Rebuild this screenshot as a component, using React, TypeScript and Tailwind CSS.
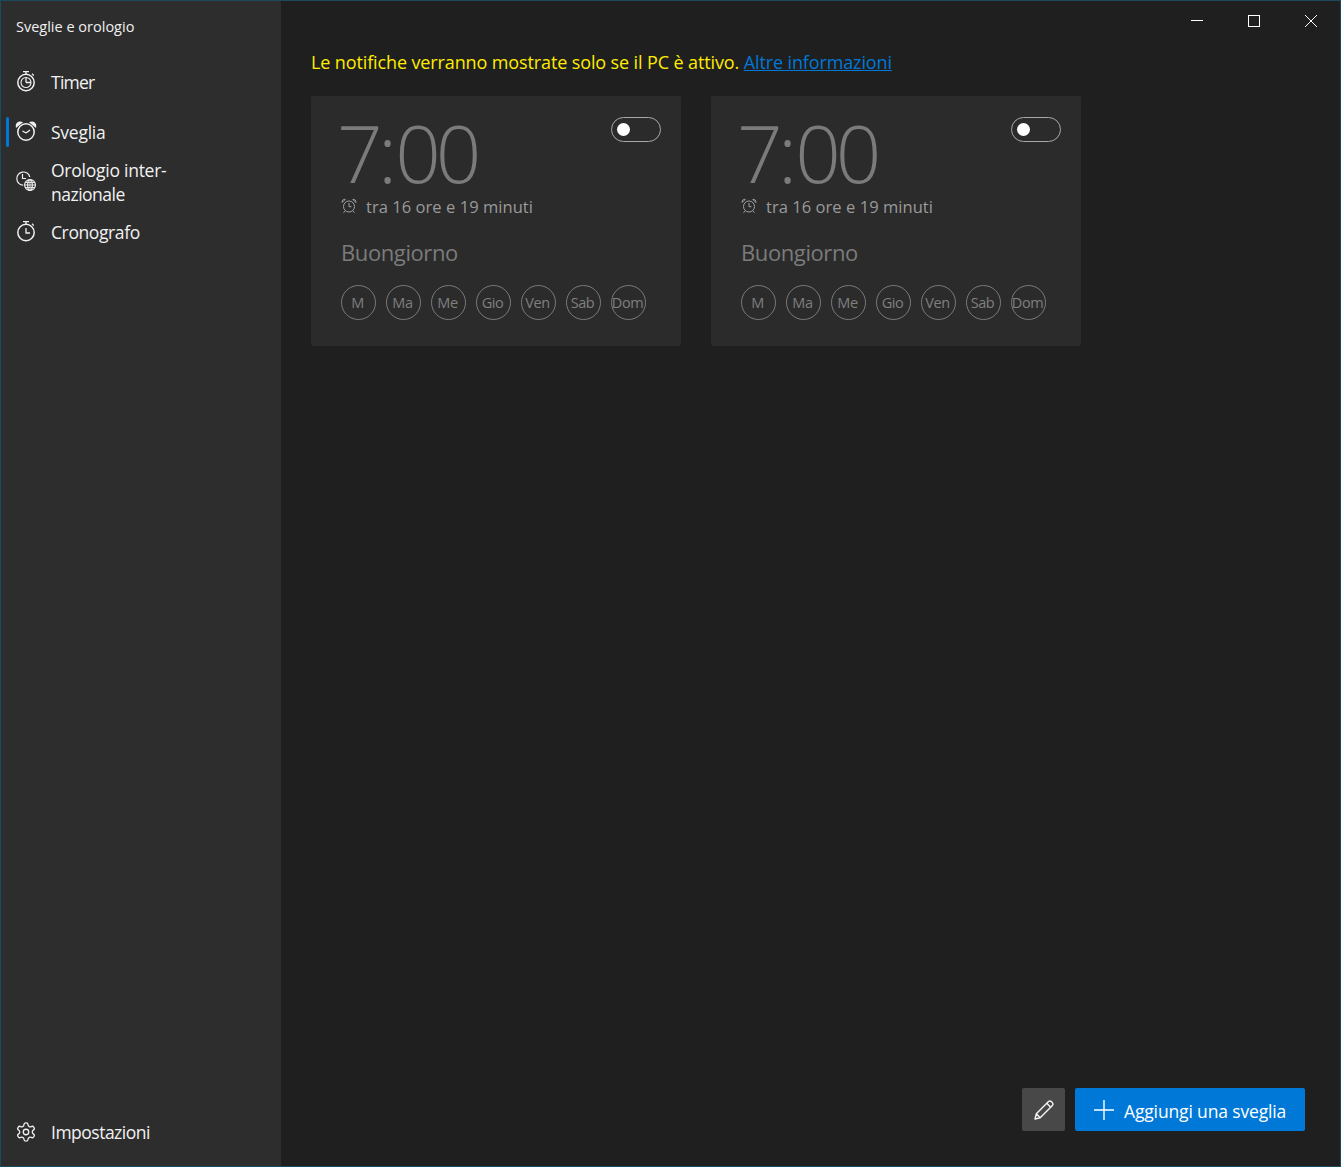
import React from "react";

function Card() {
  const days = ["M", "Ma", "Me", "Gio", "Ven", "Sab", "Dom"];
  return (
    <div className="relative w-[370px] h-[250px] bg-[#2b2b2b] rounded-[2px] pl-[30px] flex flex-col">
      <div className="h-[72px] mt-[20px] text-[80px] leading-[72px] text-[#7b7b7b] -ml-[4px] whitespace-nowrap font-light">
        <span className="tracking-[-4.6px]">7</span><span className="tracking-[-2px]">:</span><span className="tracking-[-5px]">00</span>
      </div>
      <div className="flex items-center h-[24px] mt-[7px] text-[#9a9a9a]">
        <svg width="16" height="16" viewBox="0 0 16 16" fill="none" stroke="#a0a0a0" strokeWidth="1" className="mr-[9px] -mt-[2px]">
          <circle cx="8" cy="8.5" r="5.5" />
          <path d="M8 5v3.7h2.5M1.2 4.5C.7 2.5 2.2 1 4.2 1.4L1.2 4.5zM14.8 4.5c.5-2-1-3.5-3-3.1l3 3.1zM4 13l-1.5 1.8M12 13l1.5 1.8" />
        </svg>
        <span className="text-[16.5px] tracking-[0.05px] whitespace-nowrap">tra 16 ore e 19 minuti</span>
      </div>
      <div className="mt-[17px] h-[32px] text-[22px] leading-[32px] tracking-[-0.4px] text-[#7b7b7b]">Buongiorno</div>
      <div className="flex gap-[10px] mt-[17px]">
        {days.map((d) => (
          <div key={d} className="w-[35px] h-[35px] rounded-full border border-[#7a7a7a] flex items-center justify-center pr-[2px] text-[14.5px] tracking-[-0.4px] text-[#7f7f7f] whitespace-nowrap">{d}</div>
        ))}
      </div>
      <div className="absolute right-[20px] top-[21px] w-[50px] h-[25px] rounded-full border border-[#a8a8a8] flex items-center pl-[5px]">
        <div className="w-[13px] h-[13px] rounded-full bg-white" />
      </div>
    </div>
  );
}

function NavItem({ icon, active, children }: { icon: React.ReactNode; active?: boolean; children: React.ReactNode }) {
  return (
    <div className="relative h-[50px] flex items-center text-white">
      {active && <div className="absolute left-[5px] top-[10px] w-[3px] h-[30px] rounded-[2px] bg-[#0078d7]" />}
      <div className="w-[50px] flex justify-center">{icon}</div>
      <div className="text-[17.5px] leading-[24px] text-[#f2f2f2]">{children}</div>
    </div>
  );
}

const ic = { fill: "none", stroke: "#f0f0f0", strokeWidth: 1.5 };

export default function App() {
  return (
    <div className="w-[1341px] h-[1167px] flex bg-[#1f1f1f] border border-[#1b4a5e] overflow-hidden font-['Open_Sans','Noto_Sans',sans-serif]">
      <aside className="w-[280px] bg-[#2d2d2d] flex flex-col shrink-0">
        <div className="h-[56px] pt-[15px] pl-[15px] text-[14.5px] leading-[22px] text-[#f0f0f0]">Sveglie e orologio</div>
        <NavItem icon={
          <svg width="22" height="22" viewBox="0 0 22 22" {...ic} className="-mt-[2px]">
            <circle cx="11" cy="12.5" r="8.2" /><circle cx="11" cy="12.5" r="5" strokeWidth="1.1" />
            <path d="M8 1.7h6M11 1.7v3M17 3.8l1.8 1.8M11 12.5V7.5M11 12.5h5" strokeWidth="1.3" />
          </svg>}><span className="tracking-[-0.75px]">Timer</span></NavItem>
        <NavItem active icon={
          <svg width="22" height="22" viewBox="0 0 22 22" {...ic} className="-mt-[3px]">
            <circle cx="11" cy="12" r="8.2" />
            <path d="M11 13l-3.5-2M11 13l4-3" strokeWidth="1.3" />
            <path d="M1.5 6.5C1 3.5 3.5 1.5 6.5 2.5L1.5 6.5zM20.5 6.5c.5-3-2-5-5-4l5 4z" fill="#f0f0f0" stroke="#f0f0f0" />
          </svg>}><span className="tracking-[-0.25px]">Sveglia</span></NavItem>
        <NavItem icon={
          <svg width="22" height="22" viewBox="0 0 22 22" {...ic} strokeWidth="1.2" className="-mt-[3px]">
            <path d="M8.2 15.2A6.6 6.6 0 1 1 14.8 7" />
            <path d="M7.5 4v4.5h3.5" />
            <circle cx="15" cy="15" r="5.4" />
            <ellipse cx="15" cy="15" rx="2.3" ry="5.4" />
            <path d="M9.6 15h10.8M10.4 12.5h9.2M10.4 17.5h9.2M15 9.6v10.8" strokeWidth="0.9" />
          </svg>}>
          <div className="tracking-[-0.25px]">Orologio inter-</div><div className="tracking-[-0.5px]">nazionale</div>
        </NavItem>
        <NavItem icon={
          <svg width="22" height="22" viewBox="0 0 22 22" {...ic} className="-mt-[2px]">
            <circle cx="11" cy="12.5" r="8.2" />
            <path d="M8 1.7h6M11 1.7v3M17 3.8l1.8 1.8M11 8v5h4" strokeWidth="1.3" />
          </svg>}><span className="tracking-[-0.4px]">Cronografo</span></NavItem>
        <div className="flex-1" />
        <div className="mb-[9px]">
          <NavItem icon={
            <svg width="22" height="22" viewBox="0 0 24 24" fill="none" stroke="#f0f0f0" strokeWidth="1.4" strokeLinejoin="round">
              <path d="M12.22 2h-.44a2 2 0 0 0-2 2v.18a2 2 0 0 1-1 1.73l-.43.25a2 2 0 0 1-2 0l-.15-.08a2 2 0 0 0-2.73.73l-.22.38a2 2 0 0 0 .73 2.73l.15.1a2 2 0 0 1 1 1.72v.51a2 2 0 0 1-1 1.74l-.15.09a2 2 0 0 0-.73 2.73l.22.38a2 2 0 0 0 2.73.73l.15-.08a2 2 0 0 1 2 0l.43.25a2 2 0 0 1 1 1.73V20a2 2 0 0 0 2 2h.44a2 2 0 0 0 2-2v-.18a2 2 0 0 1 1-1.73l.43-.25a2 2 0 0 1 2 0l.15.08a2 2 0 0 0 2.73-.73l.22-.39a2 2 0 0 0-.73-2.73l-.15-.08a2 2 0 0 1-1-1.74v-.5a2 2 0 0 1 1-1.74l.15-.09a2 2 0 0 0 .73-2.73l-.22-.38a2 2 0 0 0-2.73-.73l-.15.08a2 2 0 0 1-2 0l-.43-.25a2 2 0 0 1-1-1.73V4a2 2 0 0 0-2-2z" />
              <circle cx="12" cy="12" r="3" />
            </svg>}><span className="tracking-[-0.5px]">Impostazioni</span></NavItem>
        </div>
      </aside>
      <main className="relative flex-1 flex flex-col pl-[30px]">
        <div className="h-[95px] pt-[48px] text-[18px] leading-[26px] tracking-[-0.12px] whitespace-nowrap text-[#ffec00]">
          Le notifiche verranno mostrate solo se il PC è attivo.{" "}
          <span className="text-[#0078d7] underline">Altre informazioni</span>
        </div>
        <div className="flex gap-[30px]">
          <Card />
          <Card />
        </div>
        <div className="flex-1" />
        <div className="flex justify-end gap-[10px] pr-[35px] mb-[35px]">
          <div className="w-[43px] h-[43px] rounded-[2px] bg-[#484848] flex items-center justify-center">
            <svg width="22" height="22" viewBox="0 0 22 22" fill="none" stroke="#f5f5f5" strokeWidth="1.4" strokeLinejoin="round">
              <path d="M2 20l1.3-5.2L15.5 2.6a2 2 0 0 1 2.8 0l1.1 1.1a2 2 0 0 1 0 2.8L7.2 18.7 2 20zM3.3 14.8l3.9 3.9M13.8 4.3l3.9 3.9" />
            </svg>
          </div>
          <div className="w-[230px] h-[43px] rounded-[2px] bg-[#0078d7] flex items-center pl-[19px] text-white">
            <svg width="20" height="20" viewBox="0 0 20 20" stroke="#fff" strokeWidth="1.4" className="mr-[10px] mt-[1px]"><path d="M10 0v20M0 10h20" /></svg>
            <span className="text-[17.5px] tracking-[-0.15px] whitespace-nowrap mt-[4px]">Aggiungi una sveglia</span>
          </div>
        </div>
        <div className="absolute top-0 right-[1px] flex text-white">
          <div className="w-[57px] h-[40px] flex items-center justify-center"><svg width="12" height="12" viewBox="0 0 12 12" stroke="#fff" strokeWidth="1"><path d="M0 5.5h12" /></svg></div>
          <div className="w-[57px] h-[40px] flex items-center justify-center"><svg width="12" height="12" viewBox="0 0 12 12" fill="none" stroke="#fff" strokeWidth="1"><rect x=".5" y=".5" width="11" height="11" /></svg></div>
          <div className="w-[57px] h-[40px] flex items-center justify-center"><svg width="12" height="12" viewBox="0 0 12 12" stroke="#fff" strokeWidth="1"><path d="M0 0l12 12M12 0L0 12" /></svg></div>
        </div>
      </main>
    </div>
  );
}
